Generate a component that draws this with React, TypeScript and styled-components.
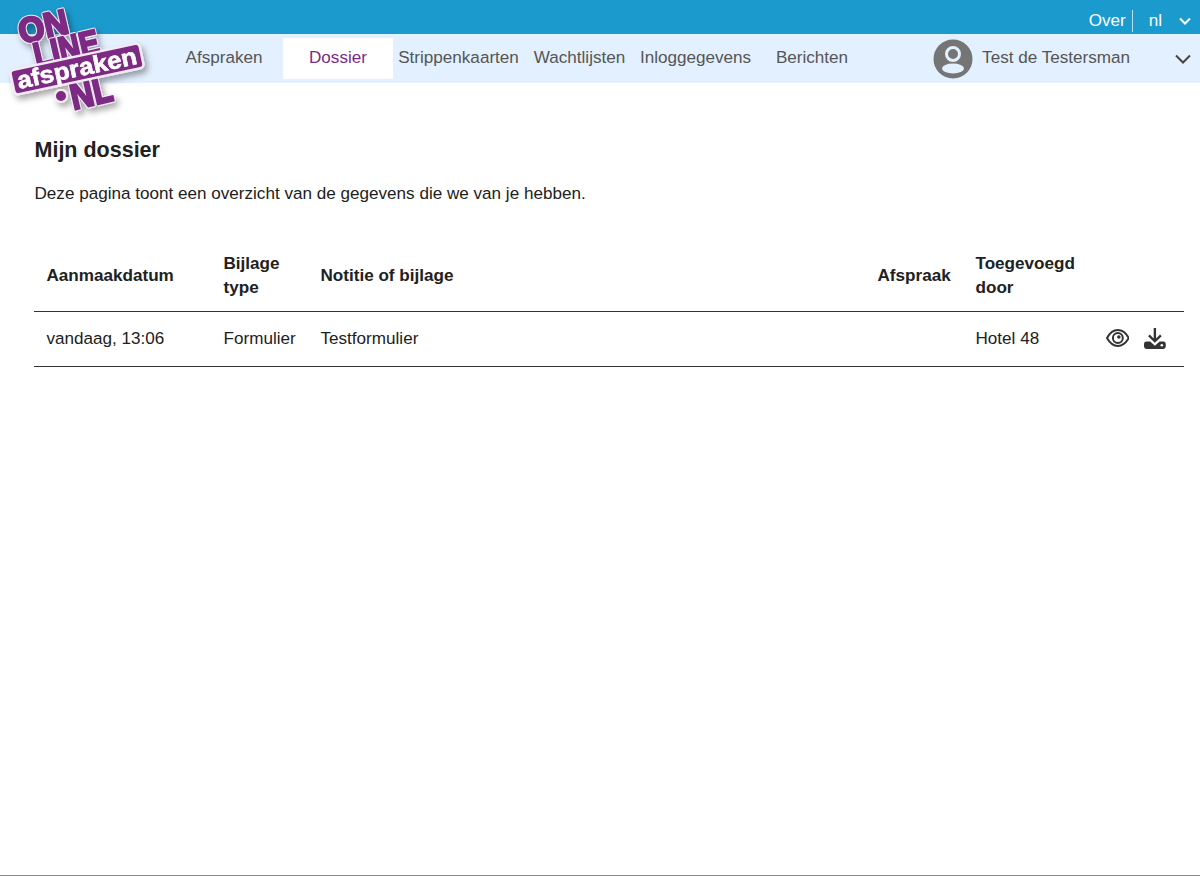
import React from 'react';
import styled, { createGlobalStyle } from 'styled-components';

const GlobalStyle = createGlobalStyle`
  html, body {
    margin: 0;
    padding: 0;
    background: #fff;
    font-family: "Liberation Sans", Arial, sans-serif;
    color: #212121;
  }
`;

const Page = styled.div`
  position: relative;
  height: 876px;
  box-sizing: border-box;
  border-bottom: 1px solid #8a8a8a;
  overflow: hidden;
`;

const TopBar = styled.div`
  height: 34px;
  background: #1b9ace;
  display: flex;
  justify-content: flex-end;
  align-items: center;
  color: #fff;
  font-size: 17.1px;
  box-sizing: border-box;
  padding: 8px 9px 0 0;
`;

const TopLink = styled.span`
  padding-right: 6px;
  height: 22px;
  line-height: 22px;
  border-right: 1px solid #b9e0f0;
`;

const Lang = styled.span`
  margin-left: 16px;
  margin-right: 17px;
`;

const NavBar = styled.nav`
  height: 49px;
  background: #e3f0ff;
  display: flex;
  box-sizing: border-box;
  padding: 4px 0 4px 165px;
  font-size: 17.1px;
  color: #555;
`;

const NavItem = styled.a<{ $width: number; $active?: boolean }>`
  width: ${({ $width }) => $width}px;
  display: flex;
  align-items: center;
  justify-content: center;
  padding-bottom: 2px;
  background: ${({ $active }) => ($active ? '#fff' : 'transparent')};
  color: ${({ $active }) => ($active ? '#7b2a83' : '#555')};
  white-space: nowrap;
`;

const UserMenu = styled.div`
  margin-left: auto;
  display: flex;
  align-items: center;
  color: #555;
  padding-right: 9px;
`;

const UserName = styled.span`
  margin-left: 9.5px;
  margin-right: 45px;
  position: relative;
  top: -1px;
`;

const LogoWrap = styled.div`
  position: absolute;
  left: 0;
  top: 0;
  width: 160px;
  height: 120px;
`;

const Content = styled.main`
  padding: 55px 16px 0 34px;
`;

const Title = styled.h1`
  margin: 0;
  padding-left: 0.5px;
  font-size: 21.5px;
  line-height: 24px;
  font-weight: 700;
`;

const Intro = styled.p`
  margin: 20px 0 0;
  padding-left: 0.5px;
  font-size: 17.1px;
  line-height: 24px;
`;

const Table = styled.table`
  width: 100%;
  margin-top: 33px;
  border-collapse: collapse;
  table-layout: fixed;
  font-size: 17.1px;
  line-height: 24px;
`;

const Th = styled.th<{ $width?: number }>`
  ${({ $width }) => ($width ? `width: ${$width}px;` : '')}
  text-align: left;
  font-weight: 700;
  padding: 13px 11.5px 11px 12.5px;
  height: 48px;
  border-bottom: 1px solid #333;
`;

const Td = styled.td`
  padding: 15px 11.5px 15px 12.5px;
  border-bottom: 1px solid #333;
`;

const Actions = styled.div`
  display: flex;
  justify-content: flex-end;
  align-items: center;
  gap: 15px;
  margin-right: 6.5px;
`;

const LogoWord: React.FC<{ x: number; y: number; len: number; size: number; children: string }> = ({
  x,
  y,
  len,
  size,
  children,
}) => (
  <g transform={`translate(${x} ${y}) rotate(-13)`}>
    <text
      x={-len / 2}
      y={size * 0.36}
      fontSize={size}
      textLength={len}
      lengthAdjust="spacingAndGlyphs"
      fill="#7b2a83"
      stroke="#f3eaf4"
      strokeWidth="4.5"
      strokeLinejoin="round"
    >
      {children}
    </text>
    <text
      x={-len / 2}
      y={size * 0.36}
      fontSize={size}
      textLength={len}
      lengthAdjust="spacingAndGlyphs"
      fill="#7b2a83"
      stroke="#7b2a83"
      strokeWidth="2.4"
    >
      {children}
    </text>
  </g>
);

const Logo = () => (
  <svg width="160" height="120" viewBox="0 0 160 120">
    <defs>
      <filter id="logoShadow" x="-20%" y="-20%" width="150%" height="150%">
        <feDropShadow dx="3" dy="4" stdDeviation="3" floodColor="#000" floodOpacity="0.35" />
      </filter>
    </defs>
    <g filter="url(#logoShadow)" fontFamily="Liberation Sans, Arial, sans-serif" fontWeight="700">
      <LogoWord x={43} y={26} len={50} size={35}>ON</LogoWord>
      <LogoWord x={66} y={48} len={66} size={35}>LINE</LogoWord>
      <LogoWord x={91} y={92} len={42} size={37}>NL</LogoWord>
      <circle cx="61" cy="96" r="6" fill="#7b2a83" stroke="#f3eaf4" strokeWidth="2" />
      <g transform="translate(77 69) rotate(-12)">
        <rect x="-66" y="-12.500" width="132" height="25" rx="4" fill="#7b2a83" stroke="#f3eaf4" strokeWidth="2.500" />
        <text
          x="-61"
          y="7.500"
          fontSize="24"
          fill="#fff"
          stroke="#fff"
          strokeWidth="0.6"
          textLength="122"
          lengthAdjust="spacingAndGlyphs"
        >
          afspraken
        </text>
      </g>
    </g>
  </svg>
);

const Chevron: React.FC<{ width: number; height: number; color: string; weight: number }> = ({
  width,
  height,
  color,
  weight,
}) => (
  <svg width={width} height={height} viewBox={`0 0 ${width} ${height}`} fill="none">
    <path d={`M1 1.500L${width / 2} ${height - 1.5}L${width - 1} 1.500`} stroke={color} strokeWidth={weight} />
  </svg>
);

const Avatar = () => (
  <svg width="40" height="40" viewBox="0 0 40 40">
    <circle cx="20" cy="20" r="19.5" fill="#757575" />
    <circle cx="20" cy="15" r="6.5" fill="none" stroke="#e3f0ff" strokeWidth="3" />
    <ellipse cx="20" cy="29.5" rx="11" ry="5" fill="#e3f0ff" />
  </svg>
);

const EyeIcon = () => (
  <svg width="24" height="20" viewBox="0 1 24 20" fill="none" stroke="#333" strokeWidth="2">
    <path d="M1 10C3.800 5 7.800 2 12 2S20.200 5 23 10C20.200 15 16.200 18 12 18S3.800 15 1 10Z" />
    <circle cx="12" cy="10" r="5" />
    <circle cx="13" cy="9" r="1.800" fill="#333" stroke="none" />
  </svg>
);

const DownloadIcon = () => (
  <svg width="22" height="24" viewBox="0 0 22 24">
    <path d="M9.800 1h2.400v10.500l4-4 1.700 1.700-6.900 6.700-6.900-6.700 1.700-1.700 4 4z" fill="#333" />
    <path d="M2.500 14.500h3.700l4.800 4.300 4.800-4.300h3.700a2.500 2.500 0 0 1 2.500 2.500v2a3 3 0 0 1-3 3H3a3 3 0 0 1-3-3v-2a2.500 2.500 0 0 1 2.500-2.500Z" fill="#333" />
    <circle cx="18" cy="18.300" r="1.300" fill="#fff" />
  </svg>
);

const App: React.FC = () => (
  <Page>
    <GlobalStyle />
    <TopBar>
      <TopLink>Over</TopLink>
      <Lang>nl</Lang>
      <Chevron width={12} height={8} color="#fff" weight={2} />
    </TopBar>
    <NavBar>
      <NavItem $width={118}>Afspraken</NavItem>
      <NavItem $width={110} $active>Dossier</NavItem>
      <NavItem $width={131}>Strippenkaarten</NavItem>
      <NavItem $width={111}>Wachtlijsten</NavItem>
      <NavItem $width={121}>Inloggegevens</NavItem>
      <NavItem $width={112}>Berichten</NavItem>
      <UserMenu>
        <Avatar />
        <UserName>Test de Testersman</UserName>
        <Chevron width={16} height={10} color="#444" weight={2} />
      </UserMenu>
    </NavBar>
    <LogoWrap>
      <Logo />
    </LogoWrap>
    <Content>
      <Title>Mijn dossier</Title>
      <Intro>Deze pagina toont een overzicht van de gegevens die we van je hebben.</Intro>
      <Table>
        <thead>
          <tr>
            <Th $width={153}>Aanmaakdatum</Th>
            <Th $width={73}>Bijlage type</Th>
            <Th>Notitie of bijlage</Th>
            <Th $width={74}>Afspraak</Th>
            <Th $width={106}>Toegevoegd door</Th>
            <Th $width={67} />
          </tr>
        </thead>
        <tbody>
          <tr>
            <Td>vandaag, 13:06</Td>
            <Td>Formulier</Td>
            <Td>Testformulier</Td>
            <Td />
            <Td>Hotel 48</Td>
            <Td>
              <Actions>
                <EyeIcon />
                <DownloadIcon />
              </Actions>
            </Td>
          </tr>
        </tbody>
      </Table>
    </Content>
  </Page>
);

export default App;
